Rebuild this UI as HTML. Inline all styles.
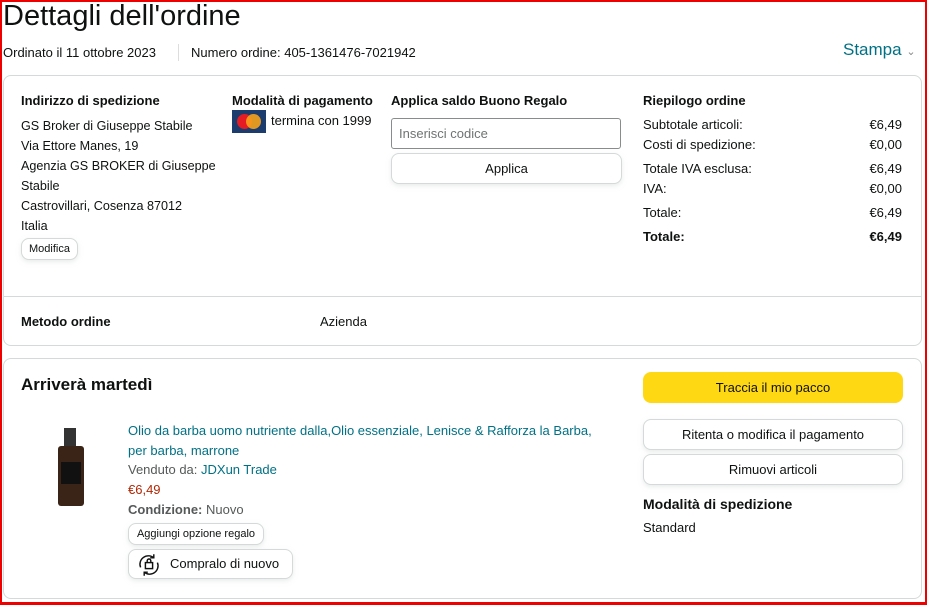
<!DOCTYPE html>
<html><head><meta charset="utf-8"><style>
*{box-sizing:border-box;margin:0;padding:0}
body{width:927px;height:605px;overflow:hidden;background:#fff;font-family:"Liberation Sans",Arial,sans-serif;color:#0f1111;font-size:13px;position:relative}
.frame{position:absolute;left:0;top:0;width:927px;height:605px;border:2px solid #e00;border-bottom-width:3px;pointer-events:none;z-index:10}
.a{position:absolute;white-space:nowrap}
.box{position:absolute;border:1px solid #d5d9d9;border-radius:8px}
.b{font-weight:bold}
.btn{position:absolute;border:1px solid #d5d9d9;border-radius:8px;background:#fff;text-align:center;box-shadow:0 2px 5px rgba(213,217,217,.5)}
.link{color:#007185}
</style></head><body>
<div class="frame"></div>
<div class="a" style="left:3px;top:0px;font-size:29px">Dettagli dell'ordine</div>
<div class="a" style="left:3px;top:45px">Ordinato il 11 ottobre 2023</div>
<div class="a" style="left:178px;top:44px;width:1px;height:17px;background:#ddd"></div>
<div class="a" style="left:191px;top:45px">Numero ordine: 405-1361476-7021942</div>
<div class="a link" style="left:843px;top:40px;font-size:17px">Stampa <span style="font-size:11px;color:#888">⌄</span></div>

<div class="box" style="left:3px;top:75px;width:919px;height:271px"></div>
<div class="a b" style="left:21px;top:93px">Indirizzo di spedizione</div>
<div class="a" style="left:21px;top:116px;line-height:20px;font-size:12.6px">GS Broker di Giuseppe Stabile<br>Via Ettore Manes, 19<br>Agenzia GS BROKER di Giuseppe<br>Stabile<br>Castrovillari, Cosenza 87012<br>Italia</div>
<div class="btn" style="left:21px;top:238px;width:57px;height:22px;font-size:11px;line-height:20px">Modifica</div>
<div class="a b" style="left:232px;top:93px">Modalità di pagamento</div>
<div class="a" style="left:232px;top:110px;width:34px;height:23px;background:#1d3c6e"><div style="position:absolute;left:5px;top:4px;width:15px;height:15px;border-radius:50%;background:#e51c23"></div><div style="position:absolute;left:14px;top:4px;width:15px;height:15px;border-radius:50%;background:#f7a21b;opacity:.9"></div></div>
<div class="a" style="left:271px;top:113px">termina con 1999</div>
<div class="a b" style="left:391px;top:93px">Applica saldo Buono Regalo</div>
<div class="a" style="left:391px;top:118px;width:230px;height:31px;border:1px solid #888c8c;border-radius:3px;padding:7px;color:#6f7373">Inserisci codice</div>
<div class="btn" style="left:391px;top:153px;width:231px;height:31px;line-height:29px">Applica</div>
<div class="a b" style="left:643px;top:93px">Riepilogo ordine</div>
<div class="a" style="left:643px;top:117px">Subtotale articoli:</div><div class="a" style="right:25px;top:117px">€6,49</div>
<div class="a" style="left:643px;top:137px">Costi di spedizione:</div><div class="a" style="right:25px;top:137px">€0,00</div>
<div class="a" style="left:643px;top:161px">Totale IVA esclusa:</div><div class="a" style="right:25px;top:161px">€6,49</div>
<div class="a" style="left:643px;top:181px">IVA:</div><div class="a" style="right:25px;top:181px">€0,00</div>
<div class="a" style="left:643px;top:205px">Totale:</div><div class="a" style="right:25px;top:205px">€6,49</div>
<div class="a b" style="left:643px;top:229px">Totale:</div><div class="a b" style="right:25px;top:229px">€6,49</div>
<div class="a" style="left:4px;top:296px;width:917px;height:1px;background:#d5d9d9"></div>
<div class="a b" style="left:21px;top:314px">Metodo ordine</div>
<div class="a" style="left:320px;top:314px">Azienda</div>

<div class="box" style="left:3px;top:358px;width:919px;height:241px"></div>
<div class="a b" style="left:21px;top:375px;font-size:17px">Arriverà martedì</div>
<div class="a" style="left:58px;top:428px;width:26px;height:78px">
<div style="position:absolute;left:6px;top:0;width:12px;height:22px;background:#333"></div>
<div style="position:absolute;left:0;top:18px;width:26px;height:60px;background:#3a2418;border-radius:3px"></div>
<div style="position:absolute;left:3px;top:34px;width:20px;height:22px;background:#111"></div></div>
<div class="a link" style="left:128px;top:421px;line-height:20px">Olio da barba uomo nutriente dalla,Olio essenziale, Lenisce &amp; Rafforza la Barba,<br>per barba, marrone</div>
<div class="a" style="left:128px;top:462px;color:#565959">Venduto da: <span class="link">JDXun Trade</span></div>
<div class="a" style="left:128px;top:482px;color:#b12704">€6,49</div>
<div class="a" style="left:128px;top:502px;color:#565959"><b>Condizione:</b> Nuovo</div>
<div class="btn" style="left:128px;top:523px;width:136px;height:22px;font-size:11px;line-height:20px">Aggiungi opzione regalo</div>
<div class="btn" style="left:128px;top:549px;width:165px;height:30px;line-height:28px;padding-left:41px;text-align:left;font-size:13px">Compralo di nuovo
<svg style="position:absolute;left:8px;top:3px" width="24" height="24" viewBox="0 0 20 20" fill="none" stroke="#111" stroke-width="1.2"><path d="M3 12a7 7 0 0 1 11-8M17 8a7 7 0 0 1-11 8"/><path d="M14 1v3h-3M6 19v-3h3"/><rect x="7" y="8" width="6" height="5"/><path d="M8.5 8V6.5a1.5 1.5 0 0 1 3 0V8"/></svg></div>
<div class="a" style="left:643px;top:372px;width:260px;height:31px;background:#ffd814;border-radius:8px;text-align:center;line-height:31px">Traccia il mio pacco</div>
<div class="btn" style="left:643px;top:419px;width:260px;height:31px;line-height:29px">Ritenta o modifica il pagamento</div>
<div class="btn" style="left:643px;top:454px;width:260px;height:31px;line-height:29px">Rimuovi articoli</div>
<div class="a b" style="left:643px;top:496px;font-size:14px">Modalità di spedizione</div>
<div class="a" style="left:643px;top:520px">Standard</div>
</body></html>
